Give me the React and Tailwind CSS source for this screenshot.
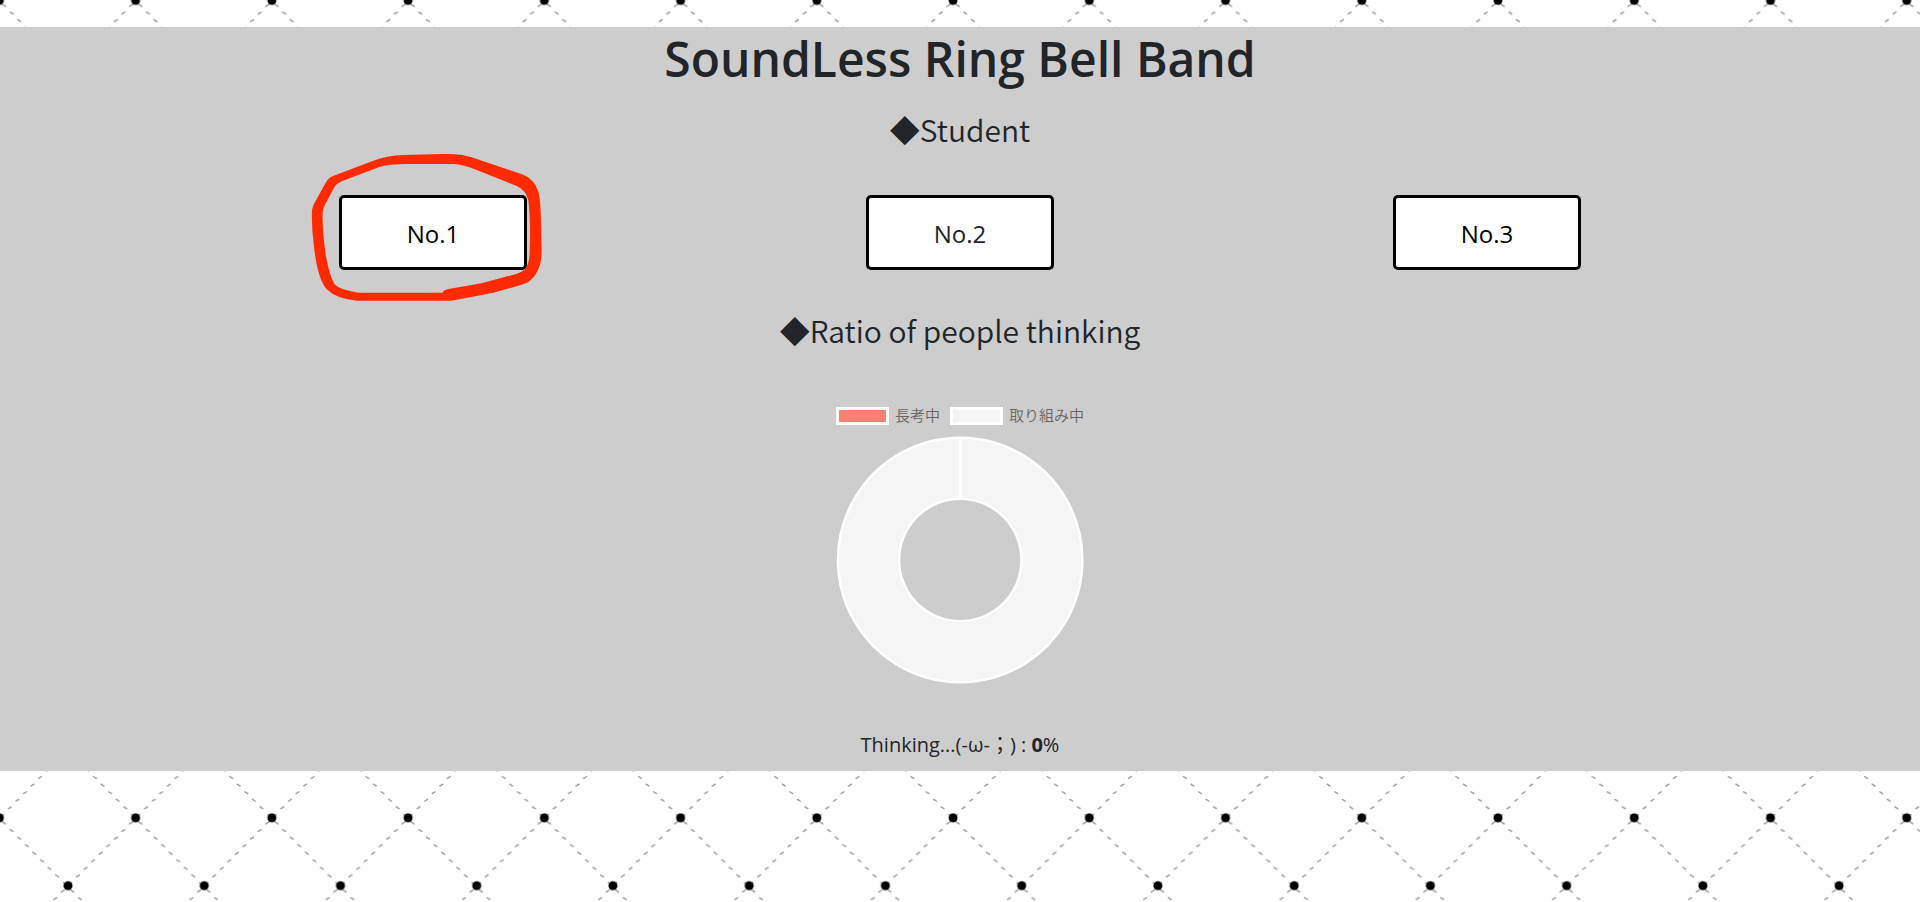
import React from "react";

const students = [
  { name: "No.1", color: "text-black" },
  { name: "No.2", color: "text-[#212529]" },
  { name: "No.3", color: "text-black" },
];

const legend = [
  { label: "長考中", swatch: "bg-[#fa8072]" },
  { label: "取り組み中", swatch: "bg-[#f5f5f5]" },
];

const TILE = 136.24;
const HALF = TILE / 2;

// Short dashes that run diagonally between neighbouring dots.
function dashPath() {
  const parts = [];
  for (let k = 0; k < 9; k += 1) {
    const d = 5.1 + 7.57 * k;
    const add = (x, y, dir) =>
      parts.push(`M${(x - 1.9).toFixed(2)} ${(y - 1.2 * dir).toFixed(2)}l3.8 ${2.4 * dir}`);
    add(d - 0.4, d, 1);
    add(TILE - d + 0.4, d, -1);
    add(HALF - d + 0.4, HALF + d, -1);
    add(HALF + d - 0.4, HALF + d, 1);
  }
  return parts.join("");
}

function LatticeBackground() {
  return (
    <svg className="absolute inset-0 h-full w-full" aria-hidden="true">
      <defs>
        <pattern id="lattice" x="-0.6" y="0.4" width="136.24" height="136.24" patternUnits="userSpaceOnUse">
          <path d={dashPath()} stroke="#999" strokeWidth="1.4" fill="none" />
          <g fill="#000">
            <circle cx="0" cy="0" r="4.5" />
            <circle cx="136.24" cy="0" r="4.5" />
            <circle cx="0" cy="136.24" r="4.5" />
            <circle cx="136.24" cy="136.24" r="4.5" />
            <circle cx="68.6" cy="67.9" r="4.5" />
          </g>
        </pattern>
      </defs>
      <rect width="100%" height="100%" fill="url(#lattice)" />
    </svg>
  );
}

function MarkerCircle() {
  return (
    <svg
      className="pointer-events-none absolute -left-[49px] -top-[55px] h-[180px] w-[280px] max-w-none"
      viewBox="0 0 840 540"
      aria-hidden="true"
    >
      <path
        fill="#ff2a00"
        fillRule="evenodd"
        d="M66 210Q68 198 75 186L105 132Q113 116 127 109L145 102L250 62Q290 47 340 45L460 42Q510 40 545 52L700 104Q735 120 745 155Q752 180 753 250L755 330Q756 395 715 426Q700 434 610 458L500 479Q490 482 470 482L200 482Q140 477 110 448Q82 415 72 320Q64 260 66 210ZM98 215Q99 205 106 192L133 142Q140 130 155 124L270 80Q300 73 350 72L490 72Q520 73 560 90L680 138Q707 150 715 180Q720 220 720 280L719 340Q717 375 705 388Q692 400 670 404L575 430L475 447Q459 451 458 458L205 458Q150 450 133 432Q115 400 105 330Q96 250 98 215Z"
      />
    </svg>
  );
}

function RatioChart() {
  return (
    <svg className="mt-2.5 h-[250px] w-[250px]" viewBox="0 0 250 250" role="img" aria-label="Ratio of people thinking">
      <path
        fill="#f5f5f5"
        fillRule="evenodd"
        stroke="#fff"
        strokeWidth="2.5"
        d="M125.2 2.8A122.2 122.2 0 1 1 125.1 2.8ZM125.2 63.8A61.2 61.2 0 1 0 125.3 63.8Z"
      />
      <path stroke="#fff" strokeWidth="2.8" d="M125.3 2.8V63.8" />
    </svg>
  );
}

function SectionHeading({ children }) {
  return (
    <h2 className="font-['Noto_Sans_CJK_JP',sans-serif] text-[30px] leading-9 font-[350]">◆{children}</h2>
  );
}

export default function App() {
  return (
    <div className="relative min-h-screen bg-white pt-[27px] font-['Noto_Sans','Noto_Sans_CJK_JP',sans-serif] text-[#212529]">
      <LatticeBackground />
      <main className="relative flex flex-col items-center bg-[#cdcdcd] pb-[11px]">
        <h1 className="font-['Open_Sans',sans-serif] text-[48px] leading-[64px] font-semibold">
          SoundLess Ring Bell Band
        </h1>
        <div className="mt-5">
          <SectionHeading>Student</SectionHeading>
        </div>
        <div className="mt-12 flex w-full justify-evenly">
          {students.map(({ name, color }, i) => (
            <div key={name} className="relative">
              <button
                type="button"
                className={`block h-[75px] w-[188px] rounded-[5px] border-3 border-black bg-white pt-0.5 font-['Open_Sans',sans-serif] text-[24px] ${color}`}
              >
                {name}
              </button>
              {i === 0 && <MarkerCircle />}
            </div>
          ))}
        </div>
        <div className="mt-[42px]">
          <SectionHeading>Ratio of people thinking</SectionHeading>
        </div>
        <ul className="mt-[59px] flex gap-2.5 font-['Noto_Sans_CJK_JP',sans-serif] text-[15px] leading-[18px] font-[350] text-[#666]">
          {legend.map((item) => (
            <li key={item.label} className="flex items-center gap-1.5">
              <span className={`h-[18px] w-[53px] border-3 border-white ${item.swatch}`} />
              <span className="-mt-0.5">{item.label}</span>
            </li>
          ))}
        </ul>
        <RatioChart />
        <p className="mt-[45px] font-['Open_Sans','Noto_Sans_CJK_TC',sans-serif] text-[20px] leading-[30px]">
          Thinking...(-ω-<span lang="zh-Hant">；</span>) : <strong className="font-bold">0</strong>%
        </p>
      </main>
    </div>
  );
}
